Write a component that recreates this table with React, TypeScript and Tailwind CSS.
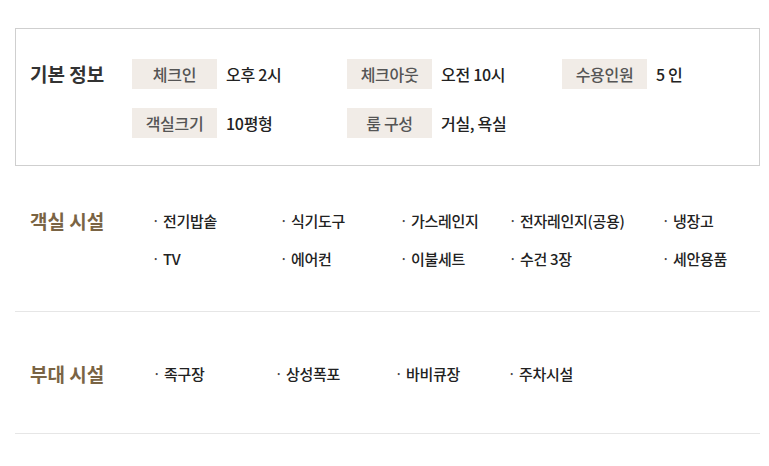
const basicInfo = [
  [
    { label: '체크인', value: '오후 2시' },
    { label: '체크아웃', value: '오전 10시' },
    { label: '수용인원', value: '5 인' },
  ],
  [
    { label: '객실크기', value: '10평형' },
    { label: '룸 구성', value: '거실, 욕실' },
  ],
];

const roomItems = [
  '전기밥솥', '식기도구', '가스레인지', '전자레인지(공용)', '냉장고',
  'TV', '에어컨', '이불세트', '수건 3장', '세안용품',
];

const extraItems = ['족구장', '상성폭포', '바비큐장', '주차시설'];

const Bullet = ({ text }: { text: string }) => (
  <div className="flex items-center h-5 text-[15px] font-medium text-[#222] whitespace-nowrap tracking-[-0.3px]">
    <span className="w-[11px] text-[13px] text-[#444]">·</span>
    <span>{text}</span>
  </div>
);

const App = () => {
  return (
    <div
      className="w-[769px] min-h-[466px] bg-white pt-[28px]"
      style={{ fontFamily: '"Noto Sans CJK KR", "Noto Sans", sans-serif' }}
    >
      <div className="ml-[15px] w-[745px]">
        {/* 기본 정보 */}
        <div className="border border-[#cfcfcf] pl-[14px] pt-[30px] pb-[27px] flex">
          <h2 className="w-[102px] h-[30px] flex items-center text-[19px] font-bold text-[#333]">
            기본 정보
          </h2>
          <div className="flex flex-col gap-[19px]">
            {basicInfo.map((row, i) => (
              <div key={i} className="grid grid-cols-[215px_215px_150px]">
                {row.map((cell) => (
                  <div key={cell.label} className="flex items-center">
                    <span className="w-[85px] h-[30px] flex items-center justify-center bg-[#f1ece7] text-[16px] font-medium text-[#555] tracking-[-0.3px]">
                      {cell.label}
                    </span>
                    <span className="ml-[9px] text-[16px] font-medium text-[#222] tracking-[-0.3px]">
                      {cell.value}
                    </span>
                  </div>
                ))}
              </div>
            ))}
          </div>
        </div>

        {/* 객실 시설 */}
        <div className="border-b border-[#e6e6e6] pt-[45px] pb-[42px] pl-[15px] flex">
          <h2 className="w-[122px] h-5 flex items-center text-[19px] font-bold text-[#7a6444]">
            객실 시설
          </h2>
          <div className="grid grid-cols-[128px_120px_109px_153px_auto] gap-y-[18px]">
            {roomItems.map((item) => (
              <Bullet key={item} text={item} />
            ))}
          </div>
        </div>

        {/* 부대 시설 */}
        <div className="border-b border-[#e6e6e6] pt-[52px] pb-[49px] pl-[15px] flex">
          <h2 className="w-[123px] h-5 flex items-center text-[19px] font-bold text-[#7a6444]">
            부대 시설
          </h2>
          <div className="grid grid-cols-[122px_120px_113px_auto]">
            {extraItems.map((item) => (
              <Bullet key={item} text={item} />
            ))}
          </div>
        </div>
      </div>
    </div>
  );
};

export default App;
